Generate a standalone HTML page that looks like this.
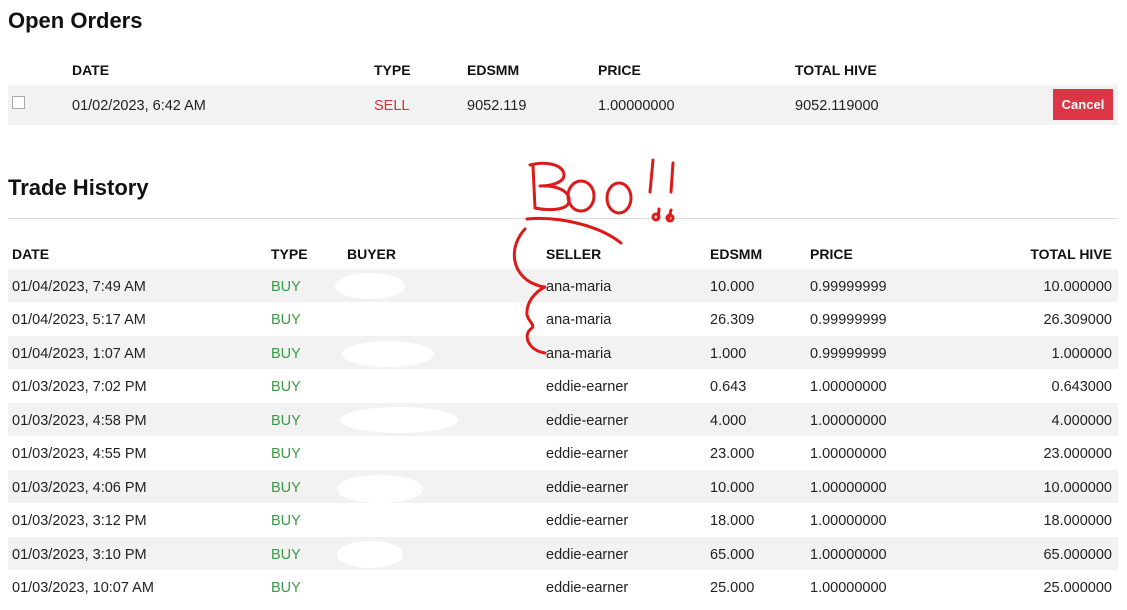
<!DOCTYPE html>
<html><head><meta charset="utf-8"><style>
*{margin:0;padding:0;box-sizing:border-box}
body{width:1127px;height:610px;background:#fff;font-family:"Liberation Sans",sans-serif;color:#222;position:relative;overflow:hidden;font-size:14.5px}
.a{position:absolute;white-space:nowrap}
h2{position:absolute;font-size:22px;font-weight:bold;color:#111}
.h{font-weight:bold;font-size:14px;color:#111}
.row{position:absolute;left:8px;width:1110px;height:33.5px}
.g{background:#f2f2f2}
.buy{color:#3a9a45}
.sell{color:#d6303e}
.blob{position:absolute;background:#fff;border-radius:50%}
</style></head><body>
<h2 style="left:8px;top:8px">Open Orders</h2>
<div class="a h" style="left:72px;top:62px">DATE</div>
<div class="a h" style="left:374px;top:62px">TYPE</div>
<div class="a h" style="left:467px;top:62px">EDSMM</div>
<div class="a h" style="left:598px;top:62px">PRICE</div>
<div class="a h" style="left:795px;top:62px">TOTAL HIVE</div>
<div class="row g" style="top:85px;height:40px"></div>
<div class="a" style="left:12px;top:96px;width:13px;height:13px;border:1px solid #aaa;background:#fff"></div>
<div class="a" style="left:72px;top:98px">01/02/2023, 6:42 AM</div>
<div class="a sell" style="left:374px;top:98px">SELL</div>
<div class="a" style="left:467px;top:98px">9052.119</div>
<div class="a" style="left:598px;top:98px">1.00000000</div>
<div class="a" style="left:795px;top:98px">9052.119000</div>
<div class="a" style="left:1053px;top:89px;width:60px;height:31px;background:#dc3545;color:#fff;font-size:13px;font-weight:bold;text-align:center;line-height:31px">Cancel</div>

<h2 style="left:8px;top:175px">Trade History</h2>
<div class="a" style="left:8px;top:218px;width:1110px;height:1px;background:#ddd"></div>
<div class="a h" style="left:12px;top:246px">DATE</div>
<div class="a h" style="left:271px;top:246px">TYPE</div>
<div class="a h" style="left:347px;top:246px">BUYER</div>
<div class="a h" style="left:546px;top:246px">SELLER</div>
<div class="a h" style="left:710px;top:246px">EDSMM</div>
<div class="a h" style="left:810px;top:246px">PRICE</div>
<div class="a h" style="right:15px;top:246px">TOTAL HIVE</div>

<div class="row g" style="top:268.5px"></div>
<div class="row g" style="top:335.5px"></div>
<div class="row g" style="top:402.5px"></div>
<div class="row g" style="top:469.5px"></div>
<div class="row g" style="top:536.5px"></div>

<div class="blob" style="left:335px;top:273px;width:70px;height:26px"></div>
<div class="blob" style="left:342px;top:341px;width:92px;height:26px"></div>
<div class="blob" style="left:340px;top:407px;width:118px;height:26px"></div>
<div class="blob" style="left:337px;top:475px;width:86px;height:28px"></div>
<div class="blob" style="left:337px;top:541px;width:66px;height:27px"></div>

<div id="rows"></div>
<script>
var d=[["01/04/2023, 7:49 AM","ana-maria","10.000","0.99999999","10.000000"],
["01/04/2023, 5:17 AM","ana-maria","26.309","0.99999999","26.309000"],
["01/04/2023, 1:07 AM","ana-maria","1.000","0.99999999","1.000000"],
["01/03/2023, 7:02 PM","eddie-earner","0.643","1.00000000","0.643000"],
["01/03/2023, 4:58 PM","eddie-earner","4.000","1.00000000","4.000000"],
["01/03/2023, 4:55 PM","eddie-earner","23.000","1.00000000","23.000000"],
["01/03/2023, 4:06 PM","eddie-earner","10.000","1.00000000","10.000000"],
["01/03/2023, 3:12 PM","eddie-earner","18.000","1.00000000","18.000000"],
["01/03/2023, 3:10 PM","eddie-earner","65.000","1.00000000","65.000000"],
["01/03/2023, 10:07 AM","eddie-earner","25.000","1.00000000","25.000000"]];
var h="";d.forEach(function(r,i){var t=278.5+i*33.5;
h+='<div class="a" style="left:12px;top:'+t+'px">'+r[0]+'</div><div class="a buy" style="left:271px;top:'+t+'px">BUY</div><div class="a" style="left:546px;top:'+t+'px">'+r[1]+'</div><div class="a" style="left:710px;top:'+t+'px">'+r[2]+'</div><div class="a" style="left:810px;top:'+t+'px">'+r[3]+'</div><div class="a" style="right:15px;top:'+t+'px">'+r[4]+'</div>';});
document.getElementById("rows").innerHTML=h;
</script>
<svg class="a" style="left:0;top:0" width="1127" height="610" fill="none" stroke="#dd1a1a" stroke-width="3" stroke-linecap="round" stroke-linejoin="round">
<path d="M533 166 L535 208"/>
<path d="M530 165 C545 161 562 164 564 174 C565 182 552 186 540 186 C556 185 571 191 569 202 C567 210 550 211 535 208"/>
<ellipse cx="581" cy="196" rx="13" ry="15"/>
<ellipse cx="619" cy="198" rx="12" ry="15"/>
<path d="M653 160 L650 192"/>
<path d="M673 163 L671 192"/>
<circle cx="656" cy="217" r="3"/>
<path d="M659 209 L658 219"/>
<circle cx="670" cy="218" r="3"/>
<path d="M671 210 L669 218"/>
<path d="M527 219 C560 216 600 226 621 243"/>
<path d="M525 229 C510 245 510 270 530 282 C540 287 544 287 545 287 C535 292 526 302 527 315 C529 322 535 325 532 328 C526 332 525 340 532 347 C536 351 540 352 545 353"/>
</svg>
</body></html>
